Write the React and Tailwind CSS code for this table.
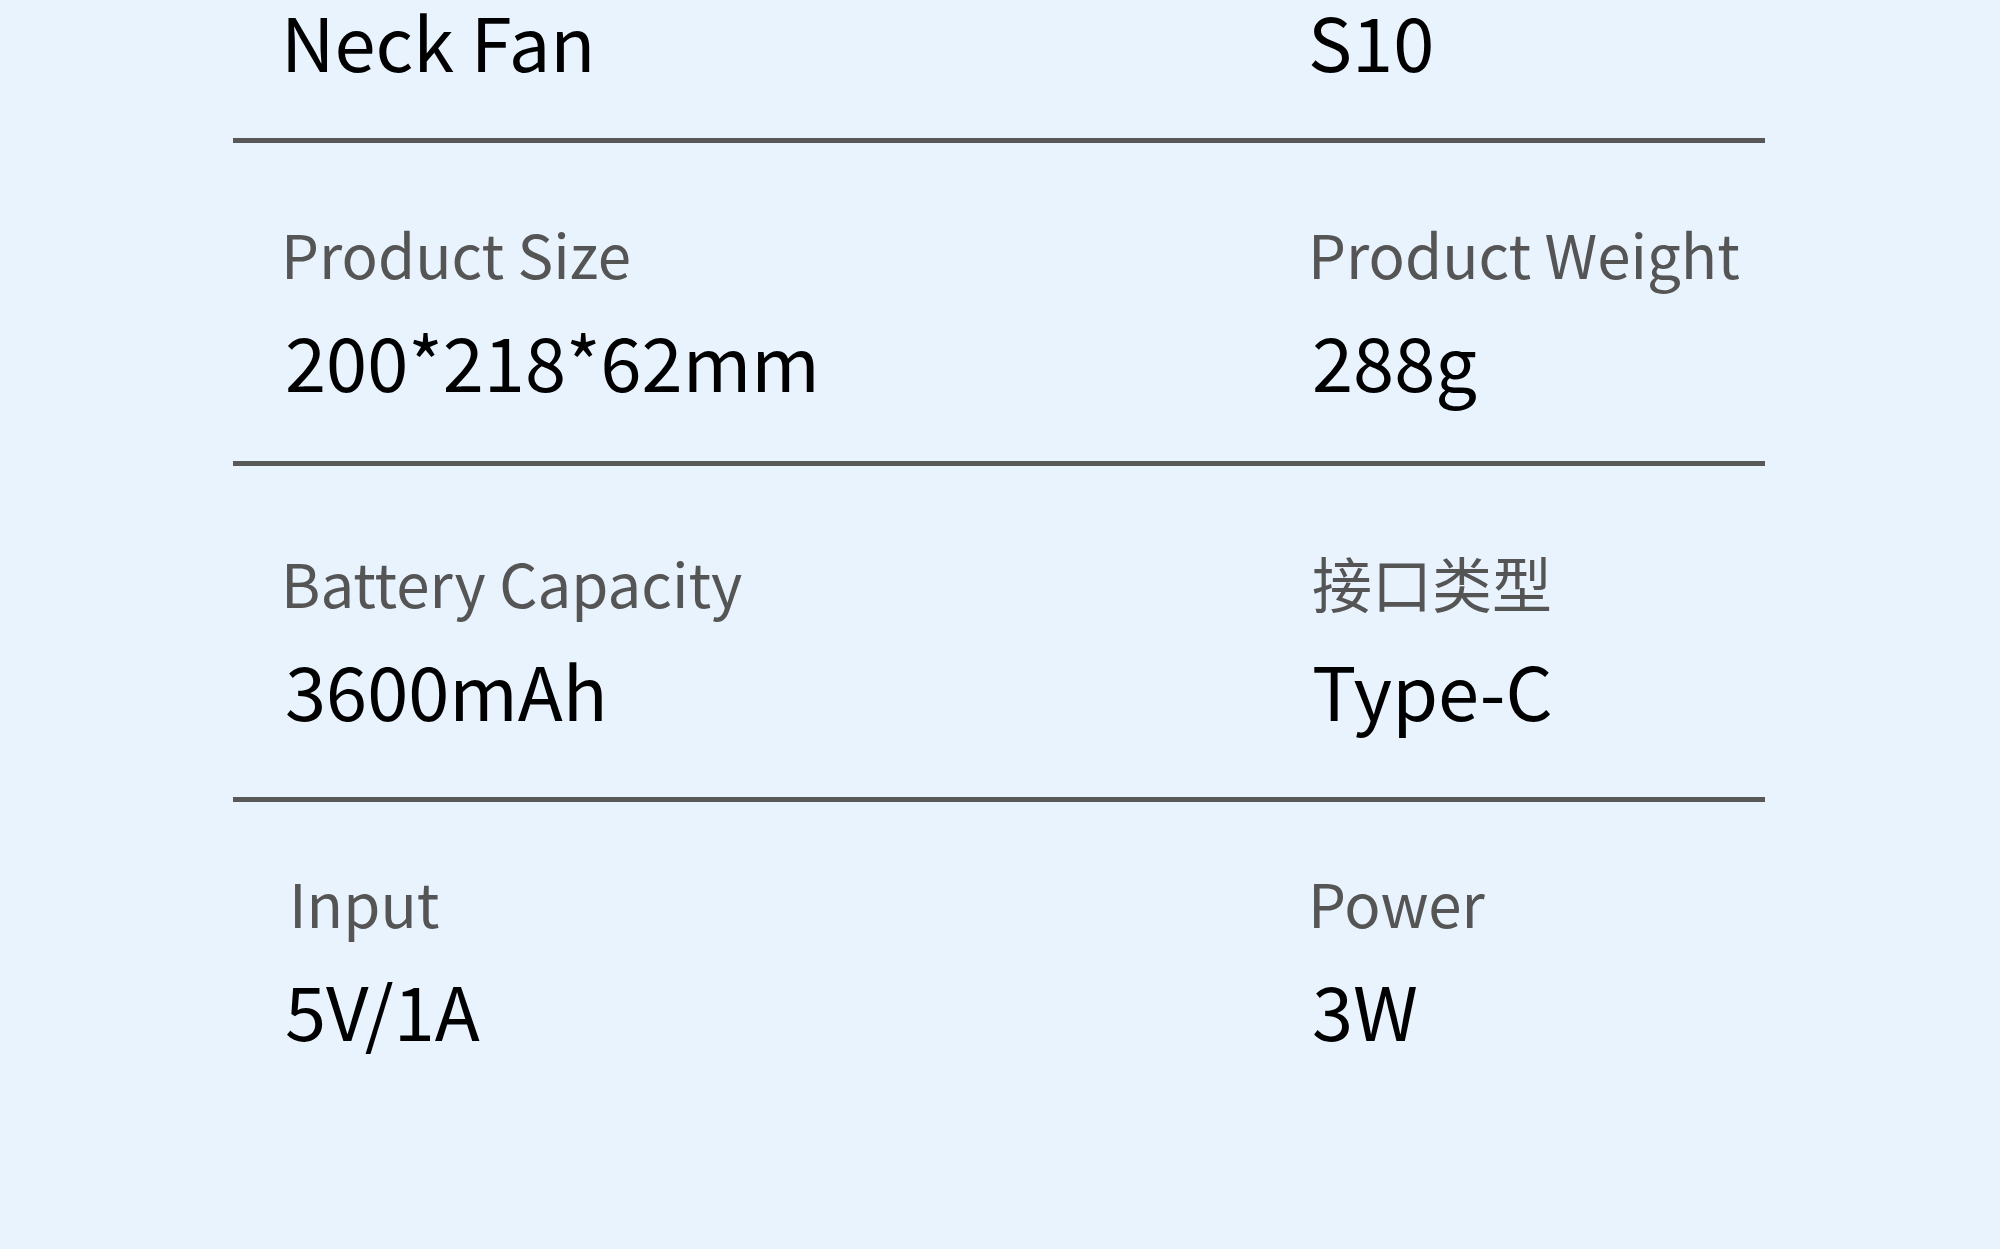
const Divider = () => <div className="h-[5px] w-full bg-[#585858]" />;

const Cell = ({ label, value, labelShift = "" }) => (
  <div className="flex flex-col whitespace-nowrap">
    <div className={`text-[60px] leading-[60px] text-[#555555] ${labelShift}`}>{label}</div>
    <div className="mt-[40px] ml-[4px] text-[74px] leading-[74px] text-black">{value}</div>
  </div>
);

export default function App() {
  return (
    <div
      className="min-h-screen w-full bg-[#e8f3fd] pt-[3px]"
      style={{ fontFamily: '"Noto Sans CJK SC", "Noto Sans", sans-serif' }}
    >
      <div className="ml-[233px] w-[1532px]">
        <div className="grid grid-cols-[1027px_1fr] pl-[48px] pb-[61px] text-[74px] leading-[74px] text-black whitespace-nowrap">
          <div>Neck Fan</div>
          <div>S10</div>
        </div>
        <Divider />

        <div className="grid grid-cols-[1027px_1fr] pl-[48px] pt-[80px] pb-[64px]">
          <Cell label="Product Size" value="200*218*62mm" />
          <Cell label="Product Weight" value="288g" />
        </div>
        <Divider />

        <div className="grid grid-cols-[1027px_1fr] pl-[48px] pt-[86px] pb-[71px]">
          <Cell label="Battery Capacity" value="3600mAh" />
          <Cell label="接口类型" value="Type-C" labelShift="ml-[4px]" />
        </div>
        <Divider />

        <div className="grid grid-cols-[1027px_1fr] pl-[48px] pt-[70px]">
          <Cell label="Input" value="5V/1A" labelShift="ml-[8px]" />
          <Cell label="Power" value="3W" />
        </div>
      </div>
    </div>
  );
}
